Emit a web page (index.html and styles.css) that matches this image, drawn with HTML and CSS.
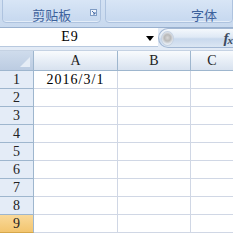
FILE: index.html
```html
<!DOCTYPE html>
<html>
<head>
<meta charset="utf-8">
<link rel="stylesheet" href="styles.css">
</head>
<body>
<div class="app">
  <div class="ribbon">
    <div class="group g1">
      <span class="glabel">剪贴板</span>
      <span class="launcher">
        <svg width="7" height="7" viewBox="0 0 7 7"><rect x="0.5" y="0.5" width="6" height="6" fill="#eef3fa" stroke="#7f9cc4"/><path d="M2 2 L5 5 M5 3 V5 H3" stroke="#4a6ea9" fill="none"/></svg>
      </span>
    </div>
    <div class="group g2">
      <span class="glabel">字体</span>
    </div>
  </div>
  <div class="fbar">
    <div class="namebox">
      <span class="name">E9</span>
      <svg class="arrow" width="8" height="5" viewBox="0 0 8 5"><path d="M0 0 H8 L4 5 Z" fill="#000"/></svg>
    </div>
    <div class="fxbar">
      <span class="knob"></span>
      <span class="fx">f<sub>x</sub></span>
    </div>
  </div>
  <div class="grid">
    <div class="corner"><span class="tri"></span></div>
    <div class="ch">A</div>
    <div class="ch">B</div>
    <div class="ch last">C</div>

    <div class="rh">1</div><div class="cell">2016/3/1</div><div class="cell"></div><div class="cell last"></div>
    <div class="rh">2</div><div class="cell"></div><div class="cell"></div><div class="cell last"></div>
    <div class="rh">3</div><div class="cell"></div><div class="cell"></div><div class="cell last"></div>
    <div class="rh">4</div><div class="cell"></div><div class="cell"></div><div class="cell last"></div>
    <div class="rh">5</div><div class="cell"></div><div class="cell"></div><div class="cell last"></div>
    <div class="rh">6</div><div class="cell"></div><div class="cell"></div><div class="cell last"></div>
    <div class="rh">7</div><div class="cell"></div><div class="cell"></div><div class="cell last"></div>
    <div class="rh">8</div><div class="cell"></div><div class="cell"></div><div class="cell last"></div>
    <div class="rh sel">9</div><div class="cell"></div><div class="cell"></div><div class="cell last"></div>
  </div>
</div>
</body>
</html>
```

FILE: styles.css
```css
html, body {
  margin: 0;
  padding: 0;
  width: 233px;
  height: 233px;
  overflow: hidden;
  background: #fff;
}
.app {
  width: 233px;
  height: 233px;
  overflow: hidden;
  font-family: "Liberation Serif", "Noto Sans CJK SC", serif;
}
.ribbon {
  height: 28px;
  background: linear-gradient(#d3e1f3, #c8d9ee);
  border-bottom: 1px solid #9ab1cf;
  display: flex;
  gap: 4px;
  padding: 0 0 0 2px;
  box-sizing: border-box;
  overflow: hidden;
}
.group {
  position: relative;
  height: 25px;
  margin-top: -2px;
  box-sizing: border-box;
  border: 1px solid #aec3df;
  border-radius: 0 0 4px 4px;
  background: linear-gradient(#d9e6f6, #c6d8ef);
  box-shadow: inset 0 -1px 0 #e4edf8;
  display: flex;
  align-items: center;
  justify-content: center;
  padding-top: 7px;
}
.g1 { width: 109px; }
.g2 { width: 140px; justify-content: flex-end; }
.glabel {
  font-family: "Noto Sans CJK SC", sans-serif;
  font-size: 13px;
  line-height: 15px;
  color: #3d629c;
  white-space: nowrap;
}
.g2 .glabel { margin-right: 15px; }
.launcher {
  position: absolute;
  right: 3px;
  top: 10px;
  display: flex;
}
.fbar {
  height: 22px;
  background: #e3ebf6;
  display: flex;
  box-sizing: border-box;
  padding-bottom: 3px;
}
.namebox {
  width: 158px;
  height: 19px;
  background: #fff;
  box-sizing: border-box;
  border-bottom: 1px solid #b8c9df;
  display: flex;
  align-items: center;
  position: relative;
}
.name {
  font-size: 14px;
  letter-spacing: 1px;
  width: 140px;
  text-align: center;
  color: #000;
}
.arrow {
  position: absolute;
  left: 146px;
  top: 8px;
}
.fxbar {
  flex: 1;
  height: 20px;
  border-radius: 10px 0 0 10px;
  border: 1px solid #a3b8d4;
  border-right: none;
  box-sizing: border-box;
  background: linear-gradient(#f4f8fc 0%, #dfe9f5 45%, #c9d9ed 55%, #dbe6f3 100%);
  display: flex;
  align-items: center;
  justify-content: space-between;
  padding: 0 0 0 2px;
}
.knob {
  width: 13px;
  height: 15px;
  border-radius: 50%;
  background: radial-gradient(circle at 50% 45%, #d7d7d7 0%, #b9b9b9 35%, #e8eef5 70%);
  border: 1px solid #c6d2e1;
  box-sizing: border-box;
}
.fx {
  font-family: "Liberation Serif", serif;
  font-style: italic;
  font-weight: bold;
  font-size: 15px;
  color: #3b4a5e;
  margin-right: 1px;
  letter-spacing: -1px;
}
.fx sub {
  font-size: 11px;
  vertical-align: -1px;
}
.grid {
  display: grid;
  grid-template-columns: 34px 84px 73px 1fr;
  grid-template-rows: 20px repeat(9, 18px);
  border-top: 1px solid #c5d2e3;
}
.corner {
  background: linear-gradient(#cfdcec, #bccce2);
  border-right: 1px solid #9eb6ce;
  border-bottom: 1px solid #9eb6ce;
  box-sizing: border-box;
  position: relative;
}
.tri {
  position: absolute;
  right: 3px;
  bottom: 3px;
  width: 0;
  height: 0;
  border-left: 10px solid transparent;
  border-bottom: 10px solid #e6edf6;
}
.ch {
  background: linear-gradient(#f9fbfd 0%, #e6edf6 55%, #d8e2ef 100%);
  border-right: 1px solid #9eb6ce;
  border-bottom: 1px solid #9eb6ce;
  box-sizing: border-box;
  display: flex;
  align-items: center;
  justify-content: center;
  font-size: 14px;
  color: #222;
  padding-top: 1px;
}
.rh {
  background: #e4ecf7;
  border-right: 1px solid #9eb6ce;
  border-bottom: 1px solid #9eb6ce;
  box-sizing: border-box;
  display: flex;
  align-items: center;
  justify-content: center;
  font-size: 14px;
  color: #222;
}
.rh.sel {
  background: linear-gradient(#f9d99a, #f3c56f);
  border-bottom-color: #d6a74a;
}
.cell {
  border-right: 1px solid #d0d7e5;
  border-bottom: 1px solid #d0d7e5;
  box-sizing: border-box;
  display: flex;
  align-items: center;
  justify-content: center;
  font-size: 14px;
  letter-spacing: 1px;
  color: #000;
}
.last { border-right: none; }
```
